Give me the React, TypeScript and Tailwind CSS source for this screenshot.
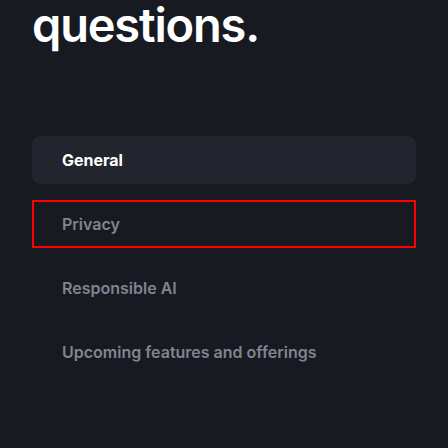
const tabs = ["General", "Privacy", "Responsible AI", "Upcoming features and offerings"];

export default function App() {
    return (
        <div className="w-[448px] h-[448px] overflow-hidden bg-[#171a21] px-8">
            <h2 className="text-[47px] leading-[56px] font-semibold tracking-tight text-white -mt-[3px] font-['Inter',sans-serif]">
                questions.
            </h2>
            <div className="mt-[83px] flex flex-col gap-4 font-['Inter',sans-serif]">
                {tabs.map((tab, idx) => (
                    <div
                        key={tab}
                        className={
                            idx === 0
                                ? "h-12 flex items-center px-[30px] rounded-lg bg-[#22252d] text-white text-[16px] font-bold"
                                : idx === 1
                                ? "h-12 flex items-center px-[30px] outline-2 outline-[#ff0000] -outline-offset-2 text-[#7f8591] text-[16px] font-semibold"
                                : "h-12 flex items-center px-[30px] text-[#7f8591] text-[16px] font-semibold"
                        }
                    >
                        {tab}
                    </div>
                ))}
            </div>
        </div>
    );
}
